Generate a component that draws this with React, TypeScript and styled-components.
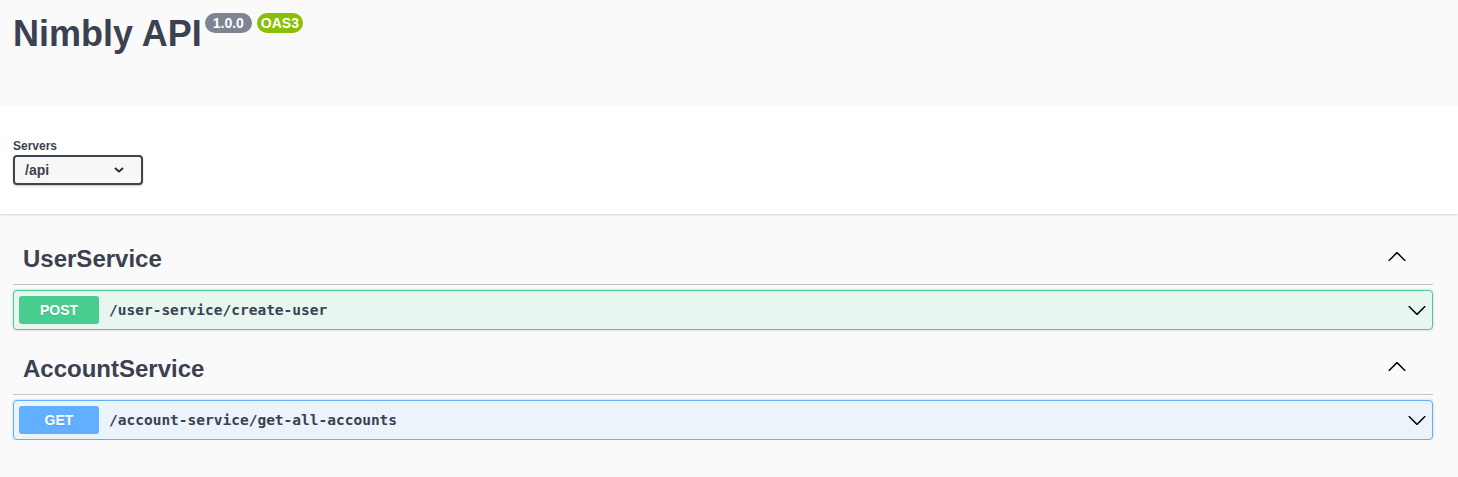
import React from 'react';
import styled, { createGlobalStyle } from 'styled-components';

const GlobalStyle = createGlobalStyle`
    html, body {
        margin: 0;
        padding: 0;
        background: #fafafa;
        font-family: "Liberation Sans", Arial, sans-serif;
        color: #3b4151;
    }
`

const Info = styled.div`
    height: 106px;
    box-sizing: border-box;
    padding: 13px 13px 0;
    background: #fafafa;
`

const TitleRow = styled.div`
    display: flex;
    align-items: flex-start;
`

const Title = styled.h2`
    margin: 0;
    font-size: 36px;
    line-height: 41px;
    font-weight: 700;
    color: #3b4151;
`

const Badge = styled.span<{ $bg: string; $pad: number }>`
    display: inline-block;
    margin-left: ${p => (p.$pad > 6 ? 3 : 5)}px;
    padding: 0 ${p => p.$pad}px;
    height: 20px;
    line-height: 20px;
    border-radius: 57px;
    background: ${p => p.$bg};
    color: #fff;
    font-size: 14px;
    font-weight: 700;
`

const Schemes = styled.section`
    background: #fff;
    padding: 33px 13px 29px;
    box-shadow: 0 1px 2px 0 rgba(0, 0, 0, 0.15);
    position: relative;
`

const Label = styled.span`
    display: block;
    font-size: 12px;
    line-height: 14px;
    font-weight: 700;
    margin-bottom: 2px;
`

const Select = styled.div`
    box-sizing: border-box;
    width: 130px;
    height: 30px;
    display: flex;
    align-items: center;
    justify-content: space-between;
    padding: 0 17px 0 10px;
    border: 2px solid #41444e;
    border-radius: 4px;
    background: #f7f7f7;
    box-shadow: 0 1px 2px 0 rgba(0, 0, 0, 0.25);
    font-size: 14px;
    font-weight: 700;
    color: #3b4151;
`

const Tags = styled.div`
    padding: 18px 25px 0 13px;
    display: flex;
    flex-direction: column;
    gap: 12px;
`

const TagSection = styled.div`
    display: flex;
    flex-direction: column;
`

const TagHeading = styled.h3`
    margin: 0 0 5px;
    padding: 11px 26px 9px 10px;
    display: flex;
    align-items: center;
    justify-content: space-between;
    border-bottom: 1px solid rgba(59, 65, 81, 0.3);
    font-size: 24px;
    line-height: 32px;
    font-weight: 700;
    color: #3b4151;

    svg {
        margin-top: -5px;
    }
`

const Opblock = styled.div<{ $color: string; $tint: string }>`
    display: flex;
    align-items: center;
    padding: 5px;
    border: 1px solid ${p => p.$color};
    border-radius: 4px;
    background: ${p => p.$tint};
    box-shadow: 0 0 3px rgba(0, 0, 0, 0.19);
`

const Method = styled.span<{ $color: string }>`
    min-width: 80px;
    height: 28px;
    display: flex;
    align-items: center;
    justify-content: center;
    border-radius: 3px;
    background: ${p => p.$color};
    color: #fff;
    font-size: 14px;
    font-weight: 700;
    text-shadow: 0 1px 0 rgba(0, 0, 0, 0.1);
`

const Path = styled.span`
    flex: 1;
    padding: 0 10px;
    font-family: "DejaVu Sans Mono", "Liberation Mono", monospace;
    font-size: 14.5px;
    font-weight: 700;
    color: #3b4151;
`

const arrow = "M17.418 6.109c.272-.268.709-.268.979 0s.271.701 0 .969l-7.908 7.83c-.27.268-.707.268-.979 0l-7.908-7.830c-.27-.268-.27-.701 0-.969.271-.268.709-.268.979 0L10 13.25l7.418-7.141z";

function Arrow({ up }: { up?: boolean }) {
    return (
        <svg width="20" height="20" viewBox="0 0 20 20" style={{ transform: up ? 'rotate(180deg)' : undefined }}>
            <path d={arrow} fill="#000" />
        </svg>
    );
}

const ops = [
    { tag: 'UserService', method: 'POST', path: '/user-service/create-user', color: '#49cc90', tint: '#e8f6f0' },
    { tag: 'AccountService', method: 'GET', path: '/account-service/get-all-accounts', color: '#61affe', tint: '#ebf3fb' },
];

export default function App() {
    return (
        <>
            <GlobalStyle />
            <Info>
                <TitleRow>
                    <Title>Nimbly API</Title>
                    <Badge $bg="#7d8492" $pad={8}>1.0.0</Badge>
                    <Badge $bg="#89bf04" $pad={4}>OAS3</Badge>
                </TitleRow>
            </Info>
            <Schemes>
                <Label>Servers</Label>
                <Select>
                    /api
                    <svg width="10" height="6" viewBox="0 0 10 6">
                        <path d="M1 1l4 3.6L9 1" stroke="#222" strokeWidth="1.8" fill="none" />
                    </svg>
                </Select>
            </Schemes>
            <Tags>
                {ops.map(op => (
                    <TagSection key={op.tag}>
                        <TagHeading>
                            {op.tag}
                            <Arrow up />
                        </TagHeading>
                        <Opblock $color={op.color} $tint={op.tint}>
                            <Method $color={op.color}>{op.method}</Method>
                            <Path>{op.path}</Path>
                            <Arrow />
                        </Opblock>
                    </TagSection>
                ))}
            </Tags>
        </>
    );
}
